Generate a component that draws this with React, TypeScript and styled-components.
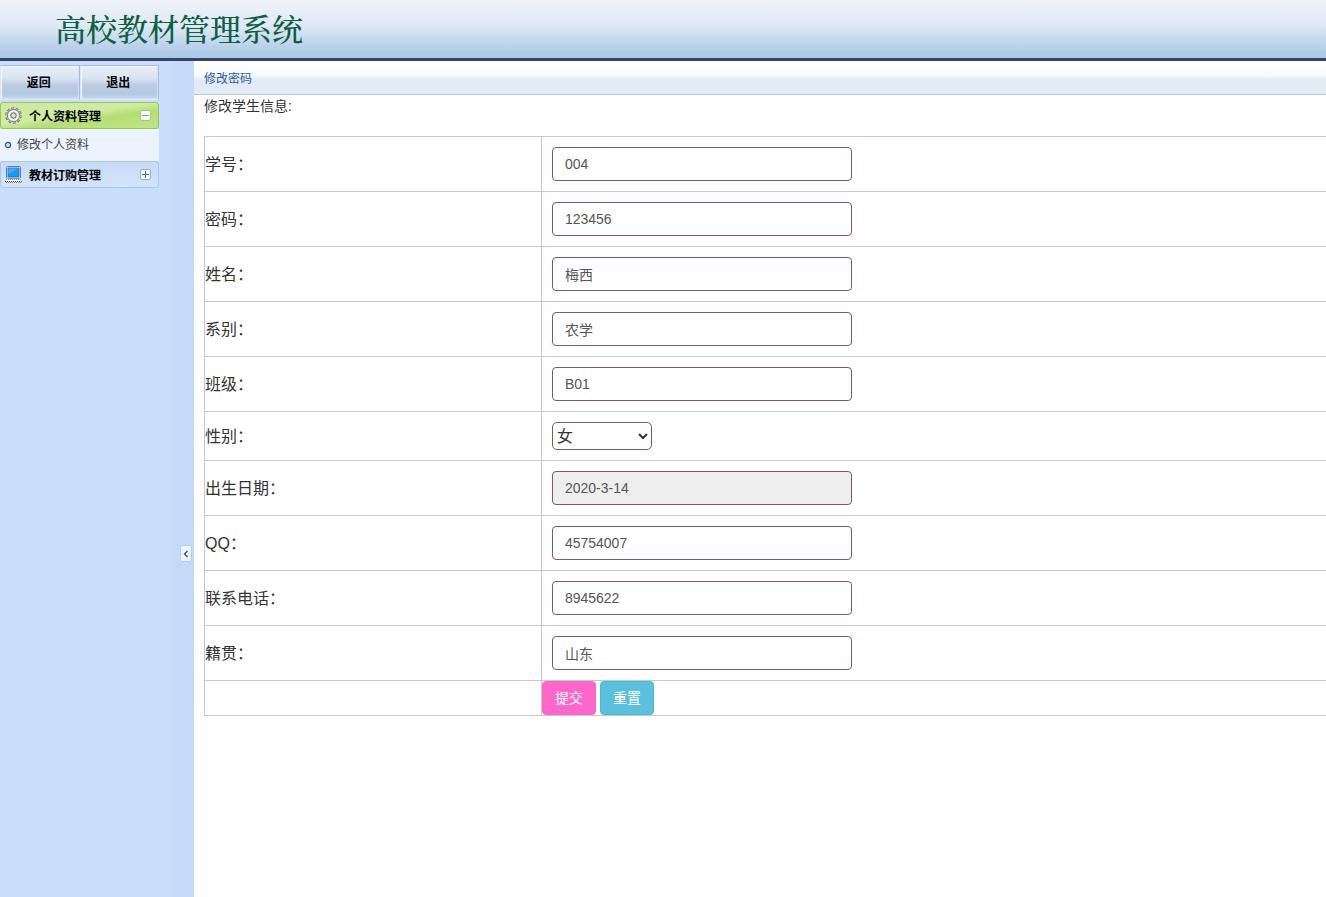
import React from "react";
import styled, { createGlobalStyle, css } from "styled-components";

const sans = `"Liberation Sans", "Noto Sans CJK SC", sans-serif`;

const GlobalStyle = createGlobalStyle`
  *, *::before, *::after { box-sizing: border-box; }
  body { margin: 0; background: #fff; color: #333; font-family: ${sans}; font-size: 14px; line-height: 20px; }
  button, input, select { font-family: inherit; margin: 0; }
`;

const Page = styled.div`
  display: flex;
  flex-direction: column;
  min-height: 100vh;
`;

const Header = styled.header`
  display: flex;
  align-items: center;
  height: 61px;
  padding: 4px 55px 0;
  background: linear-gradient(#f0f3fa 0%, #dfe8f5 45%, #b0cbe8 90%, #abc9e4 100%);
  border-bottom: 3px solid #33426a;
`;

const SiteTitle = styled.h1`
  margin: 0;
  color: #0b6140;
  font-family: "Liberation Serif", "Noto Serif CJK SC", "Noto Sans CJK SC", serif;
  font-size: 31px;
  line-height: 40px;
  font-weight: 500;
`;

const Body = styled.div`
  display: flex;
  flex: 1;
`;

const Sidebar = styled.aside`
  display: flex;
  flex: none;
  width: 194px;
  background: linear-gradient(90deg, #c9defa 0 166px, #c5daf8 178px 194px);
`;

const Nav = styled.nav`
  width: 159px;
  padding-top: 4px;
`;

const TopActions = styled.div`
  display: grid;
  grid-template-columns: 1fr 1fr;
  margin-bottom: 2px;
`;

const TopButton = styled.button`
  height: 35px;
  padding: 0 2px 2px 0;
  border: 1px solid #dbe7f6;
  border-top-color: #abbcd4;
  border-right-color: #a9bbd6;
  background: linear-gradient(#e6eef8 0%, #dbe6f3 35%, #bccde4 58%, #b4c8e2 85%, #c6d7ed 100%);
  box-shadow: inset 1px 1px 1px #f1f6fc, inset -1px -1px 1px #d3e0f2;
  color: #000;
  font-size: 12px;
  font-weight: 700;
`;

const GroupButton = styled.button<{ $open?: boolean }>`
  display: flex;
  align-items: center;
  gap: 7px;
  width: 100%;
  height: 27px;
  padding: 0 7px 0 4px;
  border: 1px solid #abc6ea;
  border-radius: 3px;
  background: linear-gradient(#c6dbf8, #d3e4fb);
  color: #000;
  font-size: 12px;
  font-weight: 700;
  text-align: left;
  ${(p) =>
    p.$open &&
    css`
      border-color: #9cc45c;
      background: linear-gradient(172deg, #cfeaa0 0%, #d0eca2 45%, #b4de70 62%, #c0e684 100%);
    `}
`;

const GroupName = styled.span`
  flex: 1;
`;

const SubMenu = styled.ul`
  margin: 0;
  padding: 0;
  list-style: none;
  background: #ebf3fe;
`;

const SubItem = styled.li`
  height: 32px;
  padding: 6px 4px;
`;

const SubLink = styled.a`
  display: flex;
  align-items: center;
  gap: 5px;
  color: #444;
  font-size: 12px;
  text-decoration: none;
`;

const Splitter = styled.div`
  flex: 1;
  display: flex;
  justify-content: flex-end;
  align-items: flex-start;
  padding: 484px 2px 0 0;
`;

const CollapseButton = styled.button`
  display: flex;
  align-items: center;
  justify-content: center;
  width: 12px;
  height: 17px;
  padding: 0;
  border: 1px solid #b4cdef;
  border-radius: 2px;
  background: #eef5ff;
`;

const Main = styled.main`
  flex: 1;
  min-width: 0;
  overflow: hidden;
`;

const PanelHeading = styled.h2`
  margin: 0;
  height: 34px;
  padding: 8px 10px 0;
  border-bottom: 1px solid #b5cbe0;
  background: linear-gradient(#fff 0%, #f6fafd 42%, #e1ebf5 58%, #e1ebf5 100%);
  color: #2d5a9a;
  font-size: 12px;
  font-weight: 400;
`;

const Form = styled.form`
  margin-right: -2px;
  padding: 1px 0 0 10px;
`;

const Intro = styled.p`
  margin: 0 0 20px;
`;

const FormTable = styled.table`
  width: 100%;
  border-collapse: collapse;
  border: 1px solid #c3c9ce;
`;

const LabelCell = styled.th`
  width: 30%;
  padding: 2px 0 0;
  border: 1px solid #c3c9ce;
  font-size: 16px;
  font-weight: 400;
  text-align: left;
`;

const FieldCell = styled.td<{ $flush?: boolean }>`
  padding: ${(p) => (p.$flush ? "0" : "10px")};
  border: 1px solid #c3c9ce;
`;

const control = css`
  display: block;
  border: 1px solid #84585c;
`;

const TextInput = styled.input`
  ${control}
  width: 300px;
  height: 34px;
  padding: 6px 12px;
  border-radius: 4px;
  background: #fff;
  color: #555;
  font-size: 14px;
  line-height: 20px;
  &:read-only { background: #eee; }
`;

const Select = styled.select`
  ${control}
  width: 100px;
  height: 28px;
  border-radius: 5px;
  background: #fff;
  color: #333;
  font-size: 16px;
`;

const Actions = styled.div`
  display: flex;
  gap: 4px;
`;

const ActionButton = styled.button<{ $tone: string; $edge: string }>`
  width: 54px;
  height: 34px;
  padding: 0 0 2px;
  border: 1px solid ${(p) => p.$edge};
  border-radius: 4px;
  background: ${(p) => p.$tone};
  color: #fff;
  font-size: 14px;
`;

const GearIcon = () => (
  <svg width="17" height="17" viewBox="0 0 17 17" aria-hidden="true">
    <circle cx="8.5" cy="8.5" r="7.2" fill="none" stroke="#5f6469" strokeWidth="2" strokeDasharray="2.7 1.82" />
    <circle cx="8.5" cy="8.5" r="6.2" fill="#c9ccd1" stroke="#70757b" strokeWidth="0.9" />
    <circle cx="8.5" cy="8.5" r="7" fill="none" stroke="#e6e8eb" strokeWidth="1" strokeDasharray="1.6 2.8" strokeDashoffset="-0.5" />
    <circle cx="8.5" cy="8.5" r="4.5" fill="none" stroke="#f5f6f8" strokeWidth="1.6" />
    <circle cx="8.5" cy="8.5" r="2.6" fill="#dcedbd" stroke="#686d73" strokeWidth="1" />
  </svg>
);

const ComputerIcon = () => (
  <svg width="17" height="17" viewBox="0 0 17 17" aria-hidden="true">
    <rect x="1.5" y="0.5" width="14" height="12" rx="1" fill="#e4edf5" stroke="#69788a" />
    <rect x="3" y="2" width="11" height="9" fill="#119bf4" stroke="#1a68b8" strokeWidth="0.8" />
    <path d="M3.5 8 V2.5 H13 Z" fill="#3cb2ff" />
    <path d="M1 12.8 H16 V16.5 H1 Z" fill="#f8f8f6" />
    <path d="M1 13.5 H16" stroke="#8d9297" strokeDasharray="1 1" />
    <path d="M0 15.5 H17" stroke="#3e4246" strokeDasharray="1 1" />
    <path d="M1 16.5 H16" stroke="#70757a" strokeDasharray="1 1" />
  </svg>
);

const ToggleIcon = ({ open }: { open?: boolean }) => (
  <svg width="11" height="11" viewBox="0 0 11 11" aria-hidden="true">
    <rect x="0.5" y="0.5" width="10" height="10" rx="1.5" fill="#f6faff" stroke={open ? "#a5c97a" : "#8faed4"} />
    <path d={open ? "M2 5.5 H9" : "M2 5.5 H9 M5.5 2 V9"} stroke={open ? "#8a9e80" : "#4a6d9c"} />
  </svg>
);

const BulletIcon = () => (
  <svg width="8" height="8" viewBox="0 0 8 8" aria-hidden="true">
    <circle cx="4" cy="4" r="2.6" fill="#cfe0f2" stroke="#34507c" strokeWidth="1.2" />
  </svg>
);

type Field = { id: string; label: string; value: string; readOnly?: boolean; options?: string[] };

const fields: Field[] = [
  { id: "xuehao", label: "学号：", value: "004" },
  { id: "mima", label: "密码：", value: "123456" },
  { id: "xingming", label: "姓名：", value: "梅西" },
  { id: "xibie", label: "系别：", value: "农学" },
  { id: "banji", label: "班级：", value: "B01" },
  { id: "xingbie", label: "性别：", value: "女", options: ["女", "男"] },
  { id: "shengri", label: "出生日期：", value: "2020-3-14", readOnly: true },
  { id: "qq", label: "QQ：", value: "45754007" },
  { id: "dianhua", label: "联系电话：", value: "8945622" },
  { id: "jiguan", label: "籍贯：", value: "山东" },
];

export default function App() {
  return (
    <Page lang="zh-CN">
      <GlobalStyle />
      <Header>
        <SiteTitle>高校教材管理系统</SiteTitle>
      </Header>
      <Body>
        <Sidebar>
          <Nav>
            <TopActions>
              <TopButton type="button">返回</TopButton>
              <TopButton type="button">退出</TopButton>
            </TopActions>
            <GroupButton type="button" $open aria-expanded="true">
              <GearIcon />
              <GroupName>个人资料管理</GroupName>
              <ToggleIcon open />
            </GroupButton>
            <SubMenu>
              <SubItem>
                <SubLink href="#profile">
                  <BulletIcon />
                  修改个人资料
                </SubLink>
              </SubItem>
            </SubMenu>
            <GroupButton type="button" aria-expanded="false">
              <ComputerIcon />
              <GroupName>教材订购管理</GroupName>
              <ToggleIcon />
            </GroupButton>
          </Nav>
          <Splitter>
            <CollapseButton type="button" aria-label="收起">
              <svg width="6" height="8" viewBox="0 0 6 8" aria-hidden="true">
                <path d="M4.5 1 L1.5 4 L4.5 7" fill="none" stroke="#33557f" strokeWidth="1.4" />
              </svg>
            </CollapseButton>
          </Splitter>
        </Sidebar>
        <Main>
          <PanelHeading>修改密码</PanelHeading>
          <Form onSubmit={(e: React.FormEvent) => e.preventDefault()}>
            <Intro>修改学生信息:</Intro>
            <FormTable>
              <tbody>
                {fields.map((f) => (
                  <tr key={f.id}>
                    <LabelCell scope="row">
                      <label htmlFor={f.id}>{f.label}</label>
                    </LabelCell>
                    <FieldCell>
                      {f.options ? (
                        <Select id={f.id} defaultValue={f.value}>
                          {f.options.map((o) => (
                            <option key={o}>{o}</option>
                          ))}
                        </Select>
                      ) : (
                        <TextInput id={f.id} type="text" defaultValue={f.value} readOnly={f.readOnly} />
                      )}
                    </FieldCell>
                  </tr>
                ))}
                <tr>
                  <LabelCell as="td" />
                  <FieldCell $flush>
                    <Actions>
                      <ActionButton type="submit" $tone="#ff66cc" $edge="#ff66cc">提交</ActionButton>
                      <ActionButton type="reset" $tone="#5bc0de" $edge="#46b8da">重置</ActionButton>
                    </Actions>
                  </FieldCell>
                </tr>
              </tbody>
            </FormTable>
          </Form>
        </Main>
      </Body>
    </Page>
  );
}
